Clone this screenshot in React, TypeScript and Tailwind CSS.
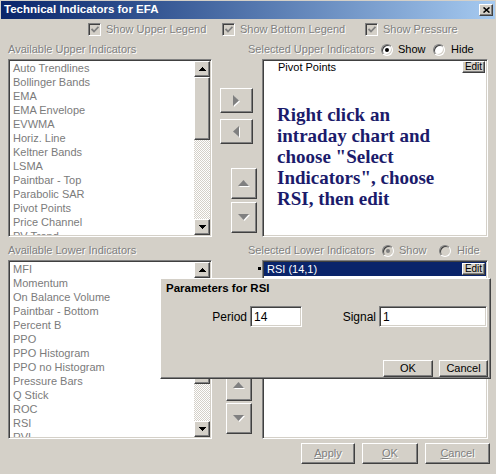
import React from "react";

const raised =
  "border border-t-white border-l-white border-r-[#404040] border-b-[#404040] shadow-[inset_-1px_-1px_0_#808080,inset_1px_1px_0_#d4d0c8] bg-[#d4d0c8]";
const sunken =
  "border border-t-[#808080] border-l-[#808080] border-r-white border-b-white shadow-[inset_1px_1px_0_#404040,inset_-1px_-1px_0_#d4d0c8]";
const dim = "text-[#808080] [text-shadow:1px_1px_0_#ffffff]";

const upperItems = [
  "Auto Trendlines",
  "Bollinger Bands",
  "EMA",
  "EMA Envelope",
  "EVWMA",
  "Horiz. Line",
  "Keltner Bands",
  "LSMA",
  "Paintbar - Top",
  "Parabolic SAR",
  "Pivot Points",
  "Price Channel",
  "PV Trend",
];

const lowerItems = [
  "MFI",
  "Momentum",
  "On Balance Volume",
  "Paintbar - Bottom",
  "Percent B",
  "PPO",
  "PPO Histogram",
  "PPO no Histogram",
  "Pressure Bars",
  "Q Stick",
  "ROC",
  "RSI",
  "RVI",
];

function Tri({ dir, color = "#000" }: { dir: "up" | "down"; color?: string }) {
  return (
    <svg width="7" height="4" viewBox="0 0 7 4" shapeRendering="crispEdges">
      <path d={dir === "up" ? "M3.5 0 L7 4 L0 4Z" : "M0 0 L7 0 L3.5 4Z"} fill={color} />
    </svg>
  );
}

function ScrollBar({ thumb }: { thumb: number }) {
  return (
    <div className="flex w-[16px] flex-col">
      <div className={`${raised} flex h-[16px] items-center justify-center`}>
        <Tri dir="up" />
      </div>
      <div className={`${raised}`} style={{ height: thumb }} />
      <div className="flex-1 bg-[repeating-conic-gradient(#ffffff_0%_25%,#d4d0c8_0%_50%)] bg-[length:2px_2px]" />
      <div className={`${raised} flex h-[16px] items-center justify-center`}>
        <Tri dir="down" />
      </div>
    </div>
  );
}

function ListBox({ items, thumb }: { items: string[]; thumb: number }) {
  return (
    <div className={`${sunken} ml-[8px] flex h-full w-[204px] bg-white p-px`}>
      <div className="flex-1 overflow-hidden pl-[3px] text-[#7b7b7b]">
        {items.map((item) => (
          <div key={item} className="h-[14px] whitespace-nowrap leading-[14px]">
            {item}
          </div>
        ))}
      </div>
      <ScrollBar thumb={thumb} />
    </div>
  );
}

function EditBtn() {
  return (
    <div className={`${raised} mr-px flex h-[12px] w-[23px] items-center justify-center text-[10px] leading-none text-black`}>
      Edit
    </div>
  );
}

function Check({ label, w }: { label: string; w: string }) {
  return (
    <div className={`flex items-center ${w}`}>
      <div className={`${sunken} flex h-[13px] w-[13px] items-center justify-center bg-[#d4d0c8]`}>
        <svg width="8" height="7" viewBox="0 0 8 7">
          <polyline points="0.5,3 3,5.5 7.5,0.8" fill="none" stroke="#808080" strokeWidth="1.8" />
        </svg>
      </div>
      <span className={`ml-[5px] ${dim}`}>{label}</span>
    </div>
  );
}

function Radio({ on, disabled }: { on?: boolean; disabled?: boolean }) {
  return (
    <div
      className={`flex h-[12px] w-[12px] items-center justify-center rounded-full border border-t-[#808080] border-l-[#808080] border-r-white border-b-white shadow-[inset_1px_1px_0_#404040,inset_-1px_-1px_0_#d4d0c8] ${
        disabled ? "bg-[#d4d0c8]" : "bg-white"
      }`}
    >
      {on && <div className={`h-[4px] w-[4px] rounded-full ${disabled ? "bg-[#808080]" : "bg-black"}`} />}
    </div>
  );
}

function ArrowBtn({ dir, cls }: { dir: "left" | "right" | "up" | "down"; cls: string }) {
  const paths: Record<string, string> = {
    right: "M0 0 L6 5.5 L0 11Z",
    left: "M6 0 L0 5.5 L6 11Z",
    up: "M5.5 0 L11 6 L0 6Z",
    down: "M0 0 L11 0 L5.5 6Z",
  };
  const horiz = dir === "left" || dir === "right";
  return (
    <div className={`${raised} flex items-center justify-center ${cls}`}>
      <svg width={horiz ? 7 : 12} height={horiz ? 12 : 7} viewBox={horiz ? "0 0 7 12" : "0 0 12 7"}>
        <path d={paths[dir]} fill="#ffffff" transform="translate(1 1)" />
        <path d={paths[dir]} fill="#808080" />
      </svg>
    </div>
  );
}

function BottomBtn({ first, rest, w }: { first: string; rest: string; w: string }) {
  return (
    <div className={`${raised} flex h-[21px] items-center justify-center ${w} ${dim}`}>
      <span className="underline underline-offset-1">{first}</span>
      {rest}
    </div>
  );
}

export default function App() {
  return (
    <div className="relative h-[474px] w-[496px] overflow-hidden bg-[#d4d0c8] font-['Liberation_Sans',Arial,sans-serif] text-[11px] text-black">
      {/* title bar */}
      <div className="mx-px mt-px flex h-[18px] items-center justify-between bg-linear-to-r from-[#0a246a] to-[#a6caf0] pl-[3px] pr-[2px]">
        <span className="text-[11.5px] font-bold text-white">Technical Indicators for EFA</span>
        <div className={`${raised} flex h-[12px] w-[14px] items-center justify-center`}>
          <svg width="7" height="6" viewBox="0 0 7 6">
            <path d="M0.5 0.5 L6.5 5.5 M6.5 0.5 L0.5 5.5" stroke="#000" strokeWidth="1.6" />
          </svg>
        </div>
      </div>

      {/* legend checkboxes */}
      <div className="mt-[3px] flex h-[14px] items-center pl-[88px]">
        <Check label="Show Upper Legend" w="w-[134px]" />
        <Check label="Show Bottom Legend" w="w-[143px]" />
        <Check label="Show Pressure" w="" />
      </div>

      {/* upper labels */}
      <div className="mt-[7px] flex h-[13px] items-center">
        <div className={`ml-[8px] w-[240px] ${dim}`}>Available Upper Indicators</div>
        <div className={`w-[133px] ${dim}`}>Selected Upper Indicators</div>
        <div className="flex w-[52px] items-center">
          <Radio on />
          <span className="ml-[5px]">Show</span>
        </div>
        <div className="flex items-center">
          <Radio />
          <span className="ml-[6px]">Hide</span>
        </div>
      </div>

      {/* upper lists */}
      <div className="mt-[3px] flex h-[178px]">
        <ListBox items={upperItems} thumb={63} />
        <div className="flex w-[50px] flex-col">
          <ArrowBtn dir="right" cls="ml-[8px] mt-[29px] h-[25px] w-[33px]" />
          <ArrowBtn dir="left" cls="ml-[8px] mt-[6px] h-[25px] w-[33px]" />
          <ArrowBtn dir="up" cls="ml-[19px] mt-[24px] h-[31px] w-[26px]" />
          <ArrowBtn dir="down" cls="ml-[19px] mt-[3px] h-[31px] w-[26px]" />
        </div>
        <div className={`${sunken} h-full w-[226px] bg-white p-px`}>
          <div className="flex h-[12px] items-center justify-between pl-[14px]">
            <span>Pivot Points</span>
            <EditBtn />
          </div>
          <div className="ml-[13px] mt-[31px] w-[180px] font-['Liberation_Serif','Times_New_Roman',serif] text-[19px] font-bold leading-[21px] text-[#1b1b6b]">
            Right click an intraday chart and choose "Select Indicators", choose RSI, then edit
          </div>
        </div>
      </div>

      {/* lower labels */}
      <div className="mt-[7px] flex h-[13px] items-center">
        <div className={`ml-[8px] w-[240px] ${dim}`}>Available Lower Indicators</div>
        <div className={`w-[134px] ${dim}`}>Selected Lower Indicators</div>
        <div className="flex w-[57px] items-center">
          <Radio on disabled />
          <span className={`ml-[5px] ${dim}`}>Show</span>
        </div>
        <div className="flex items-center">
          <Radio disabled />
          <span className={`ml-[6px] ${dim}`}>Hide</span>
        </div>
      </div>

      {/* lower lists */}
      <div className="mt-[3px] flex h-[179px]">
        <ListBox items={lowerItems} thumb={106} />
        <div className="flex w-[50px] flex-col">
          <ArrowBtn dir="right" cls="ml-[8px] mt-[29px] h-[25px] w-[33px]" />
          <ArrowBtn dir="left" cls="ml-[8px] mt-[6px] h-[25px] w-[33px]" />
          <ArrowBtn dir="up" cls="ml-[14px] mt-[25px] h-[31px] w-[26px]" />
          <ArrowBtn dir="down" cls="ml-[14px] mt-[2px] h-[31px] w-[26px]" />
        </div>
        <div className={`${sunken} relative h-full w-[226px] bg-white p-px`}>
          <div className="absolute left-[-5px] top-[6px] h-[3px] w-[3px] bg-black" />
          <div className="flex h-[14px] items-center justify-between bg-[#0a246a] pl-[3px] text-white">
            <span>RSI (14,1)</span>
            <EditBtn />
          </div>
        </div>
      </div>

      {/* bottom buttons */}
      <div className="mt-[4px] flex justify-end gap-[7px] pr-[6px]">
        <BottomBtn first="A" rest="pply" w="w-[54px]" />
        <BottomBtn first="O" rest="K" w="w-[56px]" />
        <BottomBtn first="C" rest="ancel" w="w-[65px]" />
      </div>

      {/* parameters dialog */}
      <div className={`absolute left-[160px] top-[278px] flex h-[101px] w-[331px] flex-col ${raised}`}>
        <div className="flex h-[20px] items-center pl-[5px] text-[11.5px] font-bold">Parameters for RSI</div>
        <div className="mt-[7px] flex h-[21px] items-center text-[12px]">
          <div className="w-[86px] text-right">Period</div>
          <div className={`${sunken} ml-[3px] flex h-[21px] w-[52px] items-center bg-white pl-[3px]`}>14</div>
          <div className="w-[74px] text-right">Signal</div>
          <div className={`${sunken} ml-[3px] flex h-[21px] w-[108px] items-center bg-white pl-[3px]`}>1</div>
        </div>
        <div className="mt-[33px] flex justify-end gap-[6px] pr-[2px]">
          <div className={`${raised} flex h-[17px] w-[50px] items-center justify-center`}>OK</div>
          <div className={`${raised} flex h-[17px] w-[49px] items-center justify-center`}>Cancel</div>
        </div>
      </div>
    </div>
  );
}
